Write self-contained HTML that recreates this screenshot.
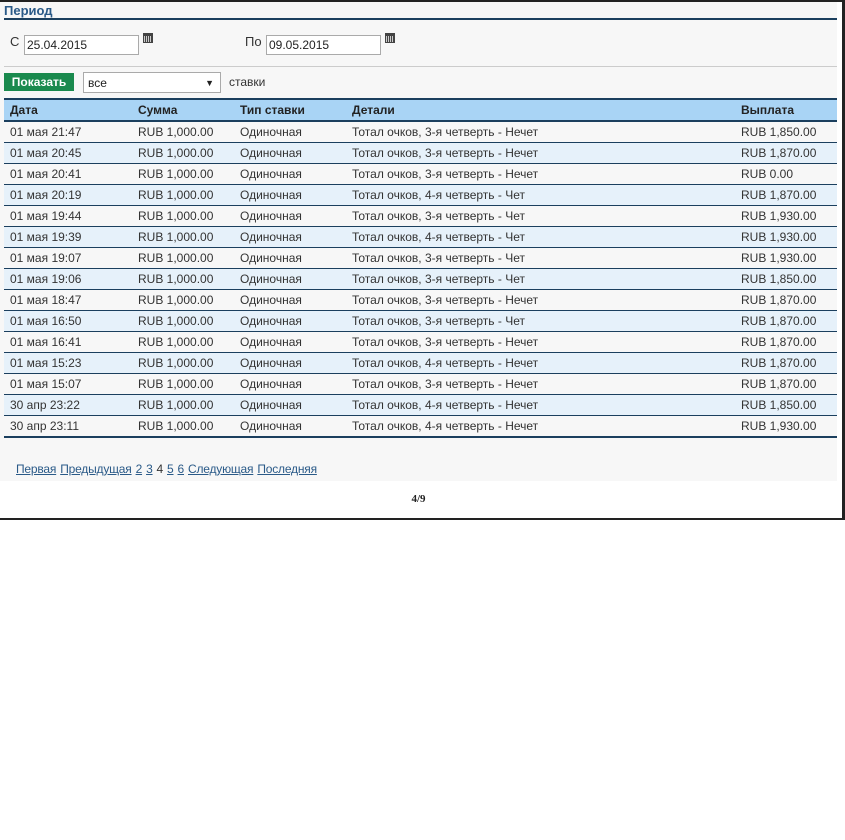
<!DOCTYPE html>
<html><head><meta charset="utf-8"><style>
body{margin:0;background:#fff;font-family:"Liberation Sans",Arial,sans-serif;font-size:12px;color:#333;}
.frame{position:absolute;left:0;top:0;width:842px;height:518px;border-right:3px solid #222;border-bottom:2px solid #222;background:#fff;}
.topbar{position:absolute;left:0;top:0;width:845px;height:2px;background:#222;z-index:5;}
.inner{position:absolute;left:0;top:0;width:837px;height:481px;background:#f7f7f7;}
.title{position:absolute;left:4px;top:3px;font-weight:bold;font-size:13px;color:#2a5a88;}
.tl{position:absolute;left:4px;top:18px;width:833px;height:2px;background:#1b3f5e;}
.lbl{position:absolute;font-size:13px;color:#333;}
.inp{position:absolute;height:18px;border:1px solid #aaa;background:#fff;font-size:12px;line-height:18px;padding-left:2px;box-sizing:border-box;color:#222;}
.cal{position:absolute;width:10px;height:10px;background:#444;}
.cal:after{content:"";position:absolute;left:1px;top:3px;width:8px;height:6px;background:repeating-linear-gradient(90deg,#ccc 0 1px,#444 1px 2px);}
.sep{position:absolute;left:4px;top:66px;width:833px;height:1px;background:#ccc;}
.btn{position:absolute;left:4px;top:73px;width:70px;height:18px;background:#1a8a4e;color:#fff;font-weight:bold;font-size:12px;line-height:18px;text-align:center;}
table{position:absolute;left:4px;top:98px;width:833px;border-collapse:collapse;}
th{background:#a9d4f5;text-align:left;font-weight:bold;font-size:12px;height:20px;padding:0 0 0 6px;border-top:2px solid #1b3f5e;border-bottom:2px solid #1b3f5e;color:#222;}
td{height:20px;padding:0 0 0 6px;border-bottom:1px solid #1b3f5e;white-space:nowrap;color:#333;}
tr:nth-child(odd) td{background:#f7f7f7;}
tr:nth-child(even) td{background:#e6f1fa;}
tbody tr:last-child td{border-bottom:2px solid #1b3f5e;}
.pg{position:absolute;left:16px;top:462px;font-size:12px;color:#333;letter-spacing:-0.2px;}
.pg a{color:#2a5a88;text-decoration:underline;margin-right:4px;}
.pg span{margin-right:4px;}
.cnt{position:absolute;left:0;width:837px;top:493px;text-align:center;font-family:"Liberation Serif",serif;font-weight:bold;font-size:11px;color:#222;}
</style></head><body>
<div class="topbar"></div>
<div class="frame">
<div class="inner"></div>
<div class="title">Период</div>
<div class="tl"></div>
<div class="lbl" style="left:10px;top:34px">С</div>
<div class="inp" style="left:24px;top:35px;width:115px;height:20px">25.04.2015</div>
<div class="cal" style="left:143px;top:33px"></div>
<div class="lbl" style="left:245px;top:34px">По</div>
<div class="inp" style="left:266px;top:35px;width:115px;height:20px">09.05.2015</div>
<div class="cal" style="left:385px;top:33px"></div>
<div class="sep"></div>
<div class="btn">Показать</div>
<div class="inp" style="left:83px;top:72px;width:138px;height:21px;line-height:20px;padding-left:4px">все<span style="position:absolute;right:6px;font-size:9px">▼</span></div>
<div class="lbl" style="left:229px;top:75px;font-size:12px">ставки</div>
<table>
<thead><tr><th style="width:122px">Дата</th><th style="width:96px">Сумма</th><th style="width:106px">Тип ставки</th><th style="width:383px">Детали</th><th>Выплата</th></tr></thead>
<tbody>
<tr><td>01 мая 21:47</td><td>RUB 1,000.00</td><td>Одиночная</td><td>Тотал очков, 3-я четверть - Нечет</td><td>RUB 1,850.00</td></tr>
<tr><td>01 мая 20:45</td><td>RUB 1,000.00</td><td>Одиночная</td><td>Тотал очков, 3-я четверть - Нечет</td><td>RUB 1,870.00</td></tr>
<tr><td>01 мая 20:41</td><td>RUB 1,000.00</td><td>Одиночная</td><td>Тотал очков, 3-я четверть - Нечет</td><td>RUB 0.00</td></tr>
<tr><td>01 мая 20:19</td><td>RUB 1,000.00</td><td>Одиночная</td><td>Тотал очков, 4-я четверть - Чет</td><td>RUB 1,870.00</td></tr>
<tr><td>01 мая 19:44</td><td>RUB 1,000.00</td><td>Одиночная</td><td>Тотал очков, 3-я четверть - Чет</td><td>RUB 1,930.00</td></tr>
<tr><td>01 мая 19:39</td><td>RUB 1,000.00</td><td>Одиночная</td><td>Тотал очков, 4-я четверть - Чет</td><td>RUB 1,930.00</td></tr>
<tr><td>01 мая 19:07</td><td>RUB 1,000.00</td><td>Одиночная</td><td>Тотал очков, 3-я четверть - Чет</td><td>RUB 1,930.00</td></tr>
<tr><td>01 мая 19:06</td><td>RUB 1,000.00</td><td>Одиночная</td><td>Тотал очков, 3-я четверть - Чет</td><td>RUB 1,850.00</td></tr>
<tr><td>01 мая 18:47</td><td>RUB 1,000.00</td><td>Одиночная</td><td>Тотал очков, 3-я четверть - Нечет</td><td>RUB 1,870.00</td></tr>
<tr><td>01 мая 16:50</td><td>RUB 1,000.00</td><td>Одиночная</td><td>Тотал очков, 3-я четверть - Чет</td><td>RUB 1,870.00</td></tr>
<tr><td>01 мая 16:41</td><td>RUB 1,000.00</td><td>Одиночная</td><td>Тотал очков, 3-я четверть - Нечет</td><td>RUB 1,870.00</td></tr>
<tr><td>01 мая 15:23</td><td>RUB 1,000.00</td><td>Одиночная</td><td>Тотал очков, 4-я четверть - Нечет</td><td>RUB 1,870.00</td></tr>
<tr><td>01 мая 15:07</td><td>RUB 1,000.00</td><td>Одиночная</td><td>Тотал очков, 3-я четверть - Нечет</td><td>RUB 1,870.00</td></tr>
<tr><td>30 апр 23:22</td><td>RUB 1,000.00</td><td>Одиночная</td><td>Тотал очков, 4-я четверть - Нечет</td><td>RUB 1,850.00</td></tr>
<tr><td>30 апр 23:11</td><td>RUB 1,000.00</td><td>Одиночная</td><td>Тотал очков, 4-я четверть - Нечет</td><td>RUB 1,930.00</td></tr>
</tbody></table>
<div class="pg"><a>Первая</a><a>Предыдущая</a><a>2</a><a>3</a><span>4</span><a>5</a><a>6</a><a>Следующая</a><a>Последняя</a></div>
<div class="cnt">4/9</div>
</div>
</body></html>
